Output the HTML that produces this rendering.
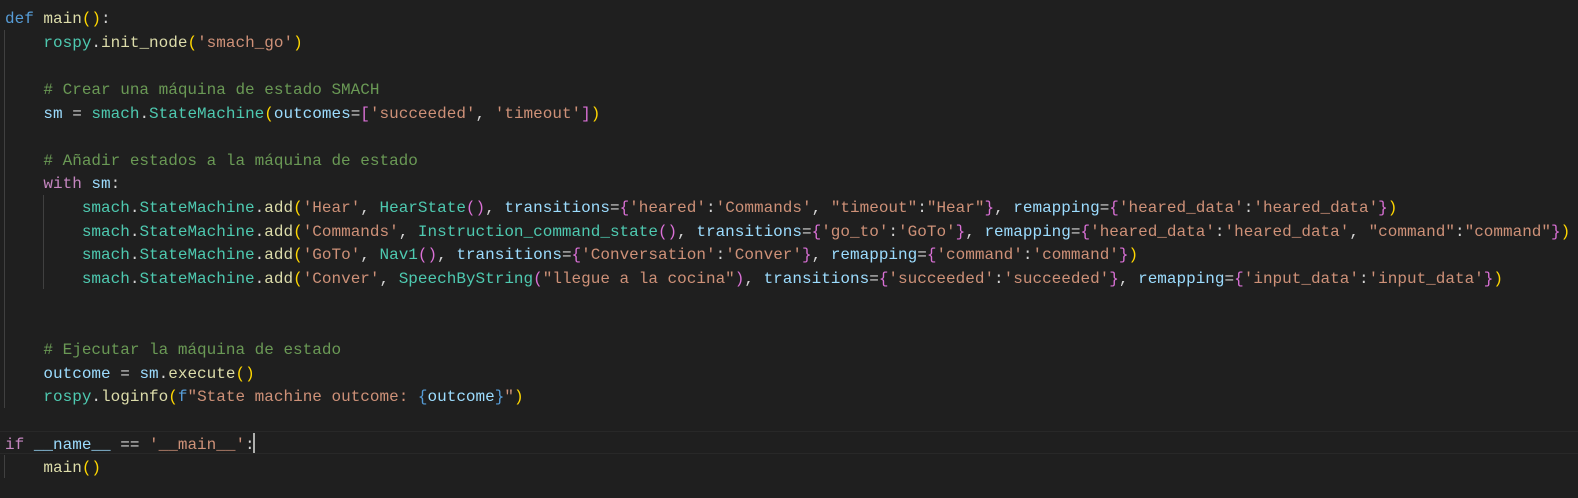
<!DOCTYPE html>
<html><head><meta charset="utf-8"><style>
html,body{margin:0;padding:0;background:#1f1f1f;width:1578px;height:498px;overflow:hidden}
.ed{position:absolute;left:5px;top:8px;font-family:"Liberation Mono",monospace;font-size:16px;line-height:23.65px;color:#d4d4d4;white-space:pre}
.l{height:23.65px}
.k{color:#569cd6}.c{color:#c586c0}.f{color:#dcdcaa}.t{color:#4ec9b0}.s{color:#ce9178}.m{color:#6a9955}.v{color:#9cdcfe}
.b1{color:#ffd700}.b2{color:#da70d6}.b3{color:#179fff}
.g{position:absolute;width:1px;background:#404040}
.hl{position:absolute;left:0;width:1578px;top:431px;height:21px;border-top:1px solid #282828;border-bottom:1px solid #282828}
.cur{position:absolute;left:253px;top:433px;width:2px;height:20px;background:#aeafad}
</style></head><body>
<div class="hl"></div>
<div class="g" style="left:4px;top:30px;height:378px"></div>
<div class="g" style="left:43px;top:195px;height:94px"></div>
<div class="g" style="left:4px;top:455px;height:23px"></div>
<div class="cur"></div>
<div class="ed"><div class="l"><span class="k">def</span> <span class="f">main</span><span class="b1">()</span>:</div><div class="l">    <span class="t">rospy</span>.<span class="f">init_node</span><span class="b1">(</span><span class="s">'smach_go'</span><span class="b1">)</span></div><div class="l"> </div><div class="l">    <span class="m"># Crear una máquina de estado SMACH</span></div><div class="l">    <span class="v">sm</span> = <span class="t">smach</span>.<span class="t">StateMachine</span><span class="b1">(</span><span class="v">outcomes</span>=<span class="b2">[</span><span class="s">'succeeded'</span>, <span class="s">'timeout'</span><span class="b2">]</span><span class="b1">)</span></div><div class="l"> </div><div class="l">    <span class="m"># Añadir estados a la máquina de estado</span></div><div class="l">    <span class="c">with</span> <span class="v">sm</span>:</div><div class="l">        <span class="t">smach</span>.<span class="t">StateMachine</span>.<span class="f">add</span><span class="b1">(</span><span class="s">'Hear'</span>, <span class="t">HearState</span><span class="b2">()</span>, <span class="v">transitions</span>=<span class="b2">{</span><span class="s">'heared'</span>:<span class="s">'Commands'</span>, <span class="s">"timeout"</span>:<span class="s">"Hear"</span><span class="b2">}</span>, <span class="v">remapping</span>=<span class="b2">{</span><span class="s">'heared_data'</span>:<span class="s">'heared_data'</span><span class="b2">}</span><span class="b1">)</span></div><div class="l">        <span class="t">smach</span>.<span class="t">StateMachine</span>.<span class="f">add</span><span class="b1">(</span><span class="s">'Commands'</span>, <span class="t">Instruction_command_state</span><span class="b2">()</span>, <span class="v">transitions</span>=<span class="b2">{</span><span class="s">'go_to'</span>:<span class="s">'GoTo'</span><span class="b2">}</span>, <span class="v">remapping</span>=<span class="b2">{</span><span class="s">'heared_data'</span>:<span class="s">'heared_data'</span>, <span class="s">"command"</span>:<span class="s">"command"</span><span class="b2">}</span><span class="b1">)</span></div><div class="l">        <span class="t">smach</span>.<span class="t">StateMachine</span>.<span class="f">add</span><span class="b1">(</span><span class="s">'GoTo'</span>, <span class="t">Nav1</span><span class="b2">()</span>, <span class="v">transitions</span>=<span class="b2">{</span><span class="s">'Conversation'</span>:<span class="s">'Conver'</span><span class="b2">}</span>, <span class="v">remapping</span>=<span class="b2">{</span><span class="s">'command'</span>:<span class="s">'command'</span><span class="b2">}</span><span class="b1">)</span></div><div class="l">        <span class="t">smach</span>.<span class="t">StateMachine</span>.<span class="f">add</span><span class="b1">(</span><span class="s">'Conver'</span>, <span class="t">SpeechByString</span><span class="b2">(</span><span class="s">"llegue a la cocina"</span><span class="b2">)</span>, <span class="v">transitions</span>=<span class="b2">{</span><span class="s">'succeeded'</span>:<span class="s">'succeeded'</span><span class="b2">}</span>, <span class="v">remapping</span>=<span class="b2">{</span><span class="s">'input_data'</span>:<span class="s">'input_data'</span><span class="b2">}</span><span class="b1">)</span></div><div class="l"> </div><div class="l"> </div><div class="l">    <span class="m"># Ejecutar la máquina de estado</span></div><div class="l">    <span class="v">outcome</span> = <span class="v">sm</span>.<span class="f">execute</span><span class="b1">()</span></div><div class="l">    <span class="t">rospy</span>.<span class="f">loginfo</span><span class="b1">(</span><span class="k">f</span><span class="s">"State machine outcome: </span><span class="k">{</span><span class="v">outcome</span><span class="k">}</span><span class="s">"</span><span class="b1">)</span></div><div class="l"> </div><div class="l"><span class="c">if</span> <span class="v">__name__</span> == <span class="s">'__main__'</span>:</div><div class="l">    <span class="f">main</span><span class="b1">()</span></div></div>
</body></html>
